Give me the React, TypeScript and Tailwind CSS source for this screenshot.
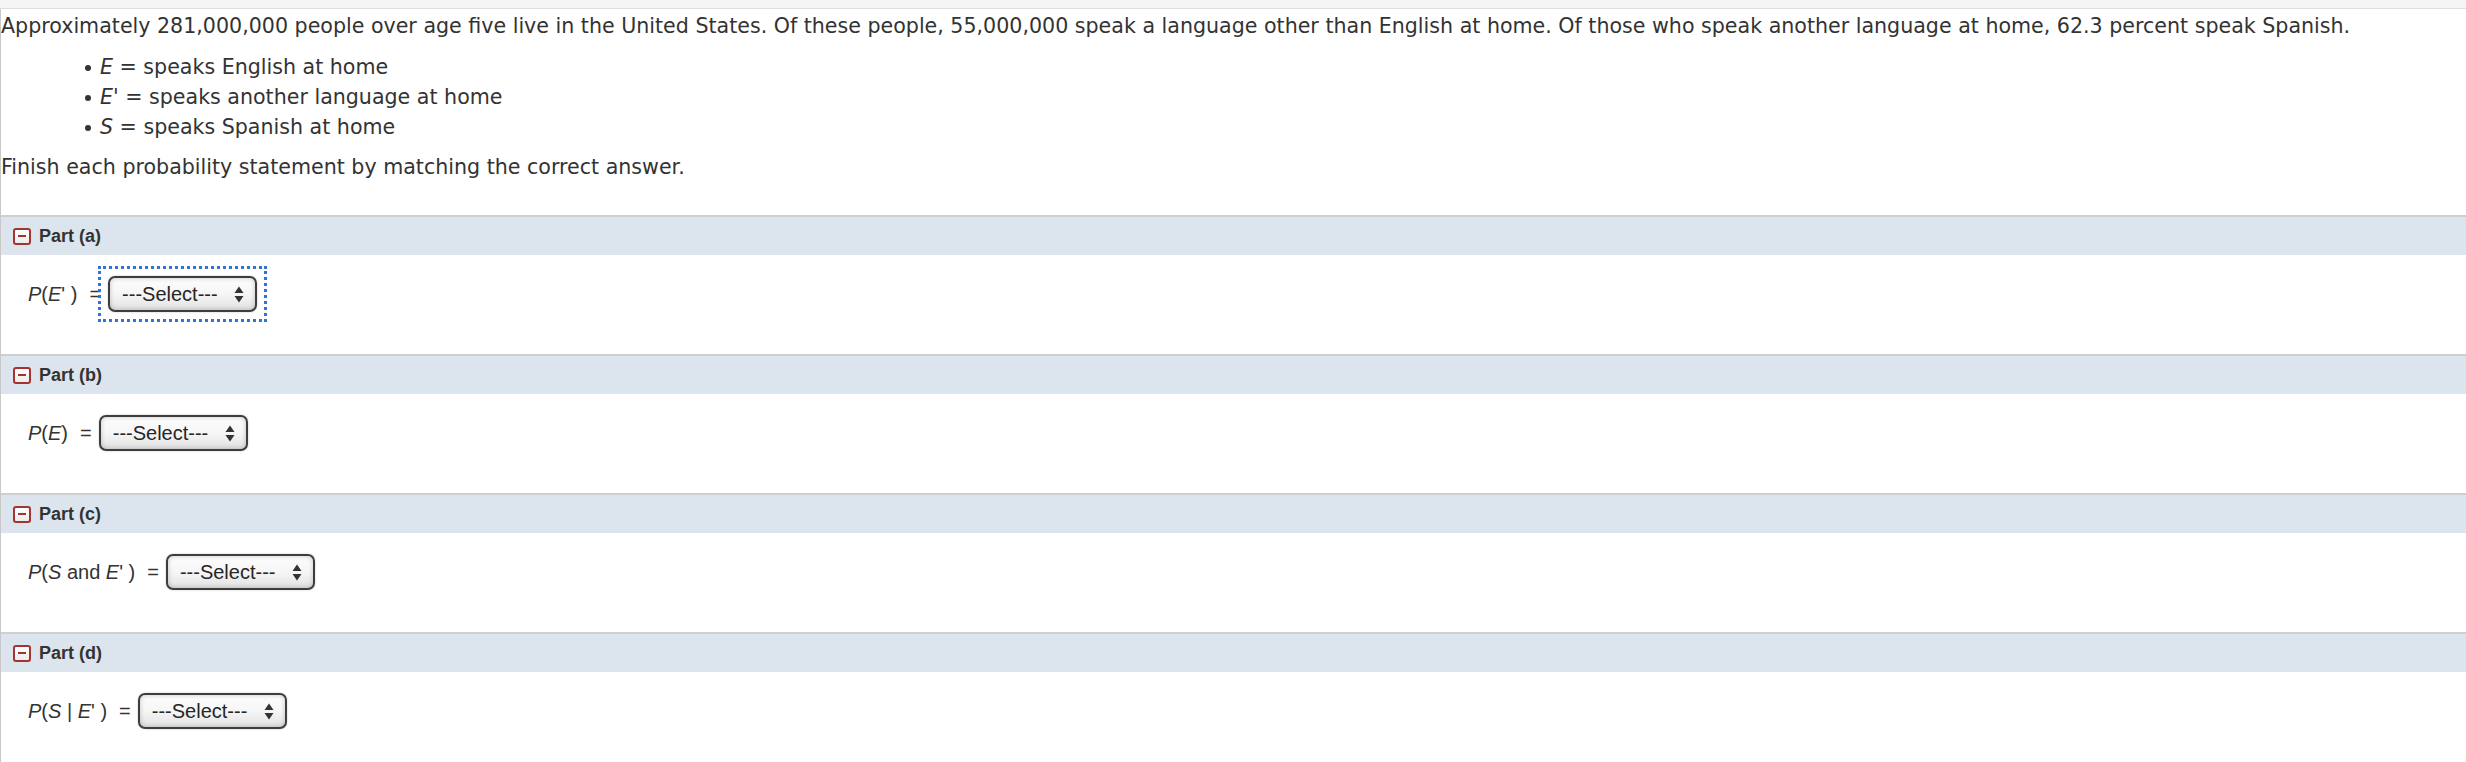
import React from 'react';

const SelectBox: React.FC<{ focused?: boolean }> = ({ focused }) => (
  <div className="relative ml-[7px] flex h-[36px] w-[149px] items-center justify-between rounded-[7px] border-2 border-[#3d3d3d] bg-gradient-to-b from-[#fdfdfd] via-[#f6f6f6] to-[#e2e2e2] pl-[12px] pr-[11px] shadow-[inset_0_0_5px_rgba(0,0,0,0.22),0_0_2px_rgba(0,0,0,0.25)]">
    {focused && <span className="absolute -inset-[12px] border-[3px] border-dotted border-[#2f74d6]" />}
    <span className="text-[20px] leading-none text-[#262626]">---Select---</span>
    <svg width="10" height="17" viewBox="0 0 10 17">
      <path d="M5 0.5 L9.5 7 L0.5 7 Z" fill="#333" />
      <path d="M0.5 10 L9.5 10 L5 16.5 Z" fill="#333" />
    </svg>
  </div>
);

const CollapseIcon = () => (
  <span className="flex h-[17px] w-[18px] items-center justify-center rounded-[3px] border-2 border-[#a3342f] bg-gradient-to-b from-white to-[#ececec]">
    <span className="h-[2px] w-[8px] bg-[#a3342f]" />
  </span>
);

interface PartProps {
  name: string;
  label: React.ReactNode;
  focused?: boolean;
}

const Part: React.FC<PartProps> = ({ name, label, focused }) => (
  <div>
    <div className="flex h-[40px] items-center gap-[8px] border-t-2 border-[#cfcfcf] bg-[#dce5ee] pl-[12px]">
      <CollapseIcon />
      <span className="text-[18px] font-bold text-[#333]">Part ({name})</span>
    </div>
    <div className="h-[99px] pl-[27px] pt-[21px]">
      <div className="flex h-[36px] items-center text-[20px] text-[#333]">
        <span>{label}</span>
        <span className="ml-[12px]">=</span>
        <SelectBox focused={focused} />
      </div>
    </div>
  </div>
);

const Bullet: React.FC<{ children: React.ReactNode }> = ({ children }) => (
  <li className="flex items-center pl-[84px]">
    <span className="mt-[2px] inline-block h-[6px] w-[6px] rounded-full bg-[#333]" />
    <span className="ml-[9px]">{children}</span>
  </li>
);

export default function App() {
  return (
    <div className="min-h-screen bg-white font-['Liberation_Sans',Arial,sans-serif]">
      <div className="h-[9px] border-b border-[#dedede] bg-[#f5f5f5]" />
      <div className="border-l border-[#c8c8c8]">
        <div className="pt-[2px] font-['DejaVu_Sans',Verdana,sans-serif] text-[20.6px] leading-[30px] text-[#333]">
          <p>
            Approximately 281,000,000 people over age five live in the United States. Of these people, 55,000,000 speak a
            language other than English at home. Of those who speak another language at home, 62.3 percent speak Spanish.
          </p>
          <ul className="mt-[11px]">
            <Bullet>
              <i>E</i> = speaks English at home
            </Bullet>
            <Bullet>
              <i>E'</i> = speaks another language at home
            </Bullet>
            <Bullet>
              <i>S</i> = speaks Spanish at home
            </Bullet>
          </ul>
          <p className="mb-[33px] mt-[10px]">Finish each probability statement by matching the correct answer.</p>
        </div>

        <Part
          name="a"
          focused
          label={
            <>
              <i>P</i>(<i>E</i>' )
            </>
          }
        />
        <Part
          name="b"
          label={
            <>
              <i>P</i>(<i>E</i>)
            </>
          }
        />
        <Part
          name="c"
          label={
            <>
              <i>P</i>(<i>S</i> and <i>E</i>' )
            </>
          }
        />
        <Part
          name="d"
          label={
            <>
              <i>P</i>(<i>S</i> | <i>E</i>' )
            </>
          }
        />
      </div>
    </div>
  );
}
